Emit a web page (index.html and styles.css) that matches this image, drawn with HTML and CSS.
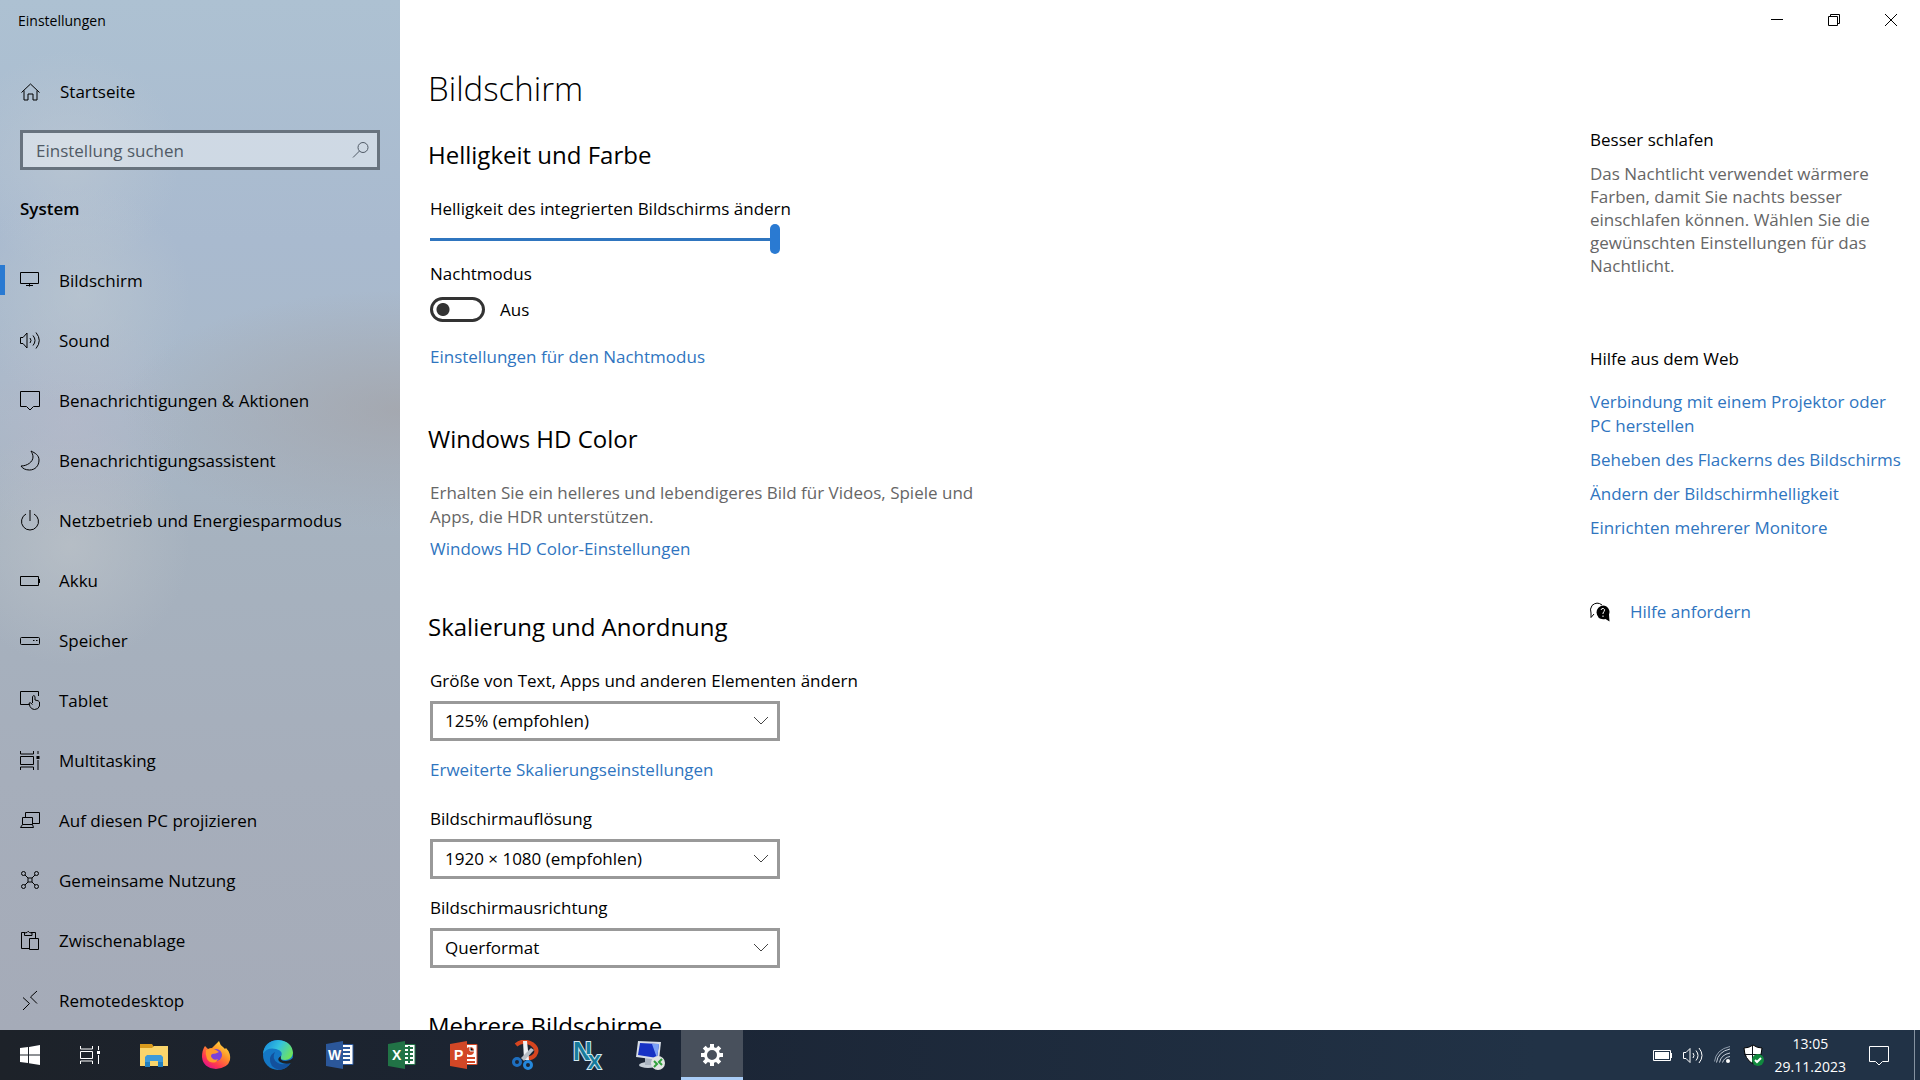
FILE: index.html
```html
<!DOCTYPE html>
<html lang="de">
<head>
	<meta charset="utf-8">
	<title>Einstellungen</title>
	<link rel="stylesheet" href="styles.css">
</head>
<body>
<div class="window">
	<nav class="sidebar">
		<div class="app-title">Einstellungen</div>
		<a class="home" href="#">
			<svg class="icon" viewBox="0 0 20 20"><path d="M1.5 10.500 10.500 2 19.500 10.500M4 8.500v9.500h4v-6h5v6h4V8.500"/></svg>
			<span>Startseite</span>
		</a>
		<div class="search">
			<input type="text" placeholder="Einstellung suchen" aria-label="Einstellung suchen">
			<svg class="icon" viewBox="0 0 20 20"><circle cx="13" cy="7.500" r="5"/><path d="M9.500 11 3 17.500"/></svg>
		</div>
		<div class="category">System</div>
		<ul class="menu">
			<li class="current"><a href="#">
				<svg class="icon" viewBox="0 0 20 20"><path d="M.5 2.500h18v11H.5zM9.500 13.500v3M6 15.500h7"/></svg>
				<span>Bildschirm</span></a></li>
			<li><a href="#">
				<svg class="icon" viewBox="0 0 20 20"><path d="M.5 7.500H3L7 3v15l-4-4.500H.5zM10 8q2 2.500 0 5M13 5.500q4 5 0 10M16 2.500q6.500 8 0 16"/></svg>
				<span>Sound</span></a></li>
			<li><a href="#">
				<svg class="icon" viewBox="0 0 20 20"><path d="M.5 1.500h19v15h-6l-3.500 3.500-3.500-3.500h-6z"/></svg>
				<span>Benachrichtigungen &amp; Aktionen</span></a></li>
			<li><a href="#">
				<svg class="icon" viewBox="0 0 20 20"><path d="M11 1c4 2 8 4 8 9 0 6-4 10-9.500 10-4 0-7-1.500-8.500-4 6 0 12-4 12-9 0-2.500-1-4-2-6z"/></svg>
				<span>Benachrichtigungsassistent</span></a></li>
			<li><a href="#">
				<svg class="icon" viewBox="0 0 20 20"><path d="M10 0v11M6 4a8.500 8.500 0 1 0 8 0"/></svg>
				<span>Netzbetrieb und Energiesparmodus</span></a></li>
			<li><a href="#">
				<svg class="icon" viewBox="0 0 20 20"><path d="M.5 6.500h18v9H.5z"/><path class="solid" d="M18.500 9H20v4h-1.500z"/></svg>
				<span>Akku</span></a></li>
			<li><a href="#">
				<svg class="icon" viewBox="0 0 20 20"><rect x=".5" y="7.500" width="19" height="7" rx="1"/><path d="M13 10.500h1.500M16 10.500h1.500"/></svg>
				<span>Speicher</span></a></li>
			<li><a href="#">
				<svg class="icon" viewBox="0 0 20 20"><path d="M9 14.500H.5v-13h18V6"/><path d="M12.500 13V6.500q1.500-2 2.500 0V10q4 .5 4.500 2v4q-1 3.500-5 3.500-3 0-4.500-3L9 13q1.500-1 3.500 1.500"/></svg>
				<span>Tablet</span></a></li>
			<li><a href="#">
				<svg class="icon" viewBox="0 0 20 20"><path d="M.5 1v3h13V1M.5 6.500h13v8H.5zM.5 20v-3h13v3M18 1v3M18 10v10"/><path class="solid" d="M16.500 6h3v3h-3z"/></svg>
				<span>Multitasking</span></a></li>
			<li><a href="#">
				<svg class="icon" viewBox="0 0 20 20"><path d="M5.500 7V2.500h14v11H13M2.500 14.500v-7h10v7M2.500 14.500.5 17.500h13l-1-3z"/></svg>
				<span>Auf diesen PC projizieren</span></a></li>
			<li><a href="#">
				<svg class="icon" viewBox="0 0 20 20"><circle cx="3.500" cy="3.500" r="2"/><circle cx="16.500" cy="3.500" r="2"/><circle cx="3.500" cy="16.500" r="2"/><circle cx="16.500" cy="16.500" r="2"/><path d="M8 8h4v4H8zM5 5l3 3M15 5l-3 3M5 15l3-3M15 15l-3-3"/></svg>
				<span>Gemeinsame Nutzung</span></a></li>
			<li><a href="#">
				<svg class="icon" viewBox="0 0 20 20"><path d="M9 18.500H1.500v-16H5M11 2.500h4.500V8M4.500 5.500V3l2.500-.5q1-2.500 2.500 0l2.500.5v2.500zM9.500 8.500h9v11h-9z"/></svg>
				<span>Zwischenablage</span></a></li>
			<li><a href="#">
				<svg class="icon" viewBox="0 0 20 20"><path d="M3 7.500 9.500 13.500 3 20M17 1l-6.500 6 6.500 6.500"/></svg>
				<span>Remotedesktop</span></a></li>
		</ul>
	</nav>

	<div class="page">
		<div class="caption">
			<button type="button" aria-label="Minimieren"><svg viewBox="0 0 12 12"><path d="M0 5.500h12"/></svg></button>
			<button type="button" aria-label="Wiederherstellen"><svg viewBox="0 0 12 12"><path d="M.5 2.500h9v9h-9zM2.500 2.500v-2h9v9h-2"/></svg></button>
			<button type="button" aria-label="Schließen"><svg viewBox="0 0 12 12"><path d="M0 0l12 12M12 0L0 12"/></svg></button>
		</div>
		<div class="columns">
			<main class="content">
				<h1>Bildschirm</h1>

				<section>
					<h2>Helligkeit und Farbe</h2>
					<label for="brightness">Helligkeit des integrierten Bildschirms ändern</label>
					<input class="slider" id="brightness" type="range" min="0" max="100" value="100">
					<label for="night">Nachtmodus</label>
					<div class="toggle">
						<input id="night" type="checkbox">
						<span>Aus</span>
					</div>
					<a class="link" href="#">Einstellungen für den Nachtmodus</a>
				</section>

				<section>
					<h2>Windows HD Color</h2>
					<p>Erhalten Sie ein helleres und lebendigeres Bild für Videos, Spiele und Apps, die HDR unterstützen.</p>
					<a class="link" href="#">Windows HD Color-Einstellungen</a>
				</section>

				<section>
					<h2>Skalierung und Anordnung</h2>
					<label for="scale">Größe von Text, Apps und anderen Elementen ändern</label>
					<div class="dropdown">
						<select id="scale"><option>125% (empfohlen)</option></select>
						<svg viewBox="0 0 16 10"><path d="M1 1l7 7 7-7"/></svg>
					</div>
					<a class="link more" href="#">Erweiterte Skalierungseinstellungen</a>
					<label for="resolution">Bildschirmauflösung</label>
					<div class="dropdown">
						<select id="resolution"><option>1920 × 1080 (empfohlen)</option></select>
						<svg viewBox="0 0 16 10"><path d="M1 1l7 7 7-7"/></svg>
					</div>
					<label for="orientation">Bildschirmausrichtung</label>
					<div class="dropdown">
						<select id="orientation"><option>Querformat</option></select>
						<svg viewBox="0 0 16 10"><path d="M1 1l7 7 7-7"/></svg>
					</div>
				</section>

				<section>
					<h2>Mehrere Bildschirme</h2>
				</section>
			</main>

			<aside class="help">
				<h3>Besser schlafen</h3>
				<p>Das Nachtlicht verwendet wärmere Farben, damit Sie nachts besser einschlafen können. Wählen Sie die gewünschten Einstellungen für das Nachtlicht.</p>
				<h3>Hilfe aus dem Web</h3>
				<ul class="web">
					<li><a class="link" href="#">Verbindung mit einem Projektor oder PC herstellen</a></li>
					<li><a class="link" href="#">Beheben des Flackerns des Bildschirms</a></li>
					<li><a class="link" href="#">Ändern der Bildschirmhelligkeit</a></li>
					<li><a class="link" href="#">Einrichten mehrerer Monitore</a></li>
				</ul>
				<div class="support">
					<svg class="icon" viewBox="0 0 20 20"><path d="M4 12 1 15.500V11Q-.5 7 2 3.500 7-1 12 3"/><path class="solid" d="M13 3.500a6.500 6.500 0 0 1 6 9l.5 7-4-2.500q-8 1.500-9-6.500a7 7 0 0 1 6.500-7z"/><path class="mark" d="M11 8q.5-2 2.500-1.500 2 1 .5 3l-1 1.500v1M13 13.500V15"/></svg>
					<a class="link" href="#">Hilfe anfordern</a>
				</div>
			</aside>
		</div>
	</div>
</div>

<footer class="taskbar">
	<div class="system">
		<button type="button" aria-label="Start"><svg width="20" height="20" viewBox="0 0 20 20"><path fill="#fff" d="M0 3l8-1v7.500H0zM9 1.900 20 0v9.500H9zM0 10.500h8V18l-8-1zM9 10.500h11V20L9 18.200z"/></svg></button>
		<button type="button" aria-label="Aktive Anwendungen"><svg width="20" height="20" viewBox="0 0 20 20"><path fill="none" stroke="#fff" d="M.5 1v3h12V1M.5 6.500h12v7H.5zM.5 19v-3h12v3M18.500 1v4M18.500 10v9"/><path fill="#fff" d="M17 6h3v3h-3z"/></svg></button>
	</div>
	<div class="apps">
		<button type="button" aria-label="Explorer"><svg width="30" height="30" viewBox="0 0 30 30"><path fill="#d99a1c" d="M1 4h12l2 3v5H1z"/><path fill="#fad56b" d="M1 8h12l2-2h14v20H1z"/><path fill="#3d9ad9" d="M6 27V17l2-2h14l2 2v10h-5v-6h-8v6z"/><path fill="#2380bf" d="M6 22h5v5H6zM19 22h5v5h-5z"/></svg></button>
		<button type="button" aria-label="Firefox"><svg width="30" height="30" viewBox="0 0 30 30">
			<defs><linearGradient id="fox" x1="1" y1="0" x2=".3" y2="1"><stop offset="0" stop-color="#fff44f"/><stop offset=".45" stop-color="#ff9628"/><stop offset=".8" stop-color="#ff3750"/><stop offset="1" stop-color="#e31587"/></linearGradient></defs>
			<path fill="url(#fox)" d="M4 6 7 9q2-1 4-1l4-4 3-3q1 4 4 6l2 2 1-1q5 5 4 12-2 8-14 9Q2 28 1 17 1 10 4 6z"/><circle cx="15" cy="15" r="6" fill="#7c42d8"/><path fill="#ff9a2b" d="M5 10q5-3 10 0l3 2q-3 2-7 2-2 2 0 4 2 3 6 1l-2 3q-6 2-9-3-2-5-1-9z"/></svg></button>
		<button type="button" aria-label="Edge"><svg width="30" height="30" viewBox="0 0 30 30">
			<defs><linearGradient id="edge" x1="0" y1=".2" x2="1" y2=".6"><stop offset="0" stop-color="#1689dc"/><stop offset=".5" stop-color="#34c3df"/><stop offset="1" stop-color="#6fe45b"/></linearGradient></defs>
			<circle cx="15" cy="15" r="15" fill="#1477c5"/><path fill="url(#edge)" d="M0 14Q1 1 15 0q14 1 15 13-1 7-8 7-5 0-4-3 3-6-5-8Q4 7 0 14z"/><path fill="#13519d" d="M12 12q-4 7 3 11 5 3 13-1-4 7-12 8-10-3-9-12 1-4 5-6z"/><path fill="#1d2228" d="M18 16q-2 5 5 5 4 0 7-3v3l-2 2q-6 2-11-1-4-3 1-6z"/></svg></button>
		<button type="button" aria-label="Word"><svg width="30" height="30" viewBox="0 0 30 30"><path fill="#fff" stroke="#2b579a" d="M15 4.500h13v20H15z"/><path stroke="#2b579a" stroke-width="2" d="M16 8h9M16 12h9M16 16h9M16 20h9"/><path fill="#2b579a" d="M1 4l17-3v28L1 26z"/><text x="3" y="20" class="letter">W</text></svg></button>
		<button type="button" aria-label="Excel"><svg width="30" height="30" viewBox="0 0 30 30"><path fill="#fff" stroke="#217346" d="M15 4.500h13v20H15z"/><path stroke="#217346" stroke-width="2" d="M16 8h10M16 12h10M16 16h10M16 20h10M22 6v17"/><path fill="#217346" d="M1 4l17-3v28L1 26z"/><text x="5" y="20" class="letter">X</text></svg></button>
		<button type="button" aria-label="PowerPoint"><svg width="30" height="30" viewBox="0 0 30 30"><path fill="#fff" stroke="#d24726" d="M15 4.500h13v20H15z"/><circle cx="21" cy="11" r="4" fill="#d24726"/><path stroke="#d24726" stroke-width="2" d="M18 18h8M18 22h8"/><path stroke="#fff" d="M21 7v4h4"/><path fill="#d24726" d="M1 4l17-3v28L1 26z"/><text x="5" y="20" class="letter">P</text></svg></button>
		<button type="button" aria-label="Snipping Tool"><svg width="30" height="30" viewBox="0 0 30 30"><path fill="none" stroke="#d6451f" stroke-width="4" d="M5 5Q12-1 21 4q7 5 3 11-3 4-9 3"/><path fill="#eef1f4" d="M12 1h4l2 19h-5z"/><path fill="#b8bec5" d="M20 8l3 2-10 11-3-3z"/><circle cx="6" cy="22" r="3.500" fill="none" stroke="#1e6fc0" stroke-width="3"/><circle cx="17" cy="25" r="3.500" fill="none" stroke="#2588dc" stroke-width="3"/></svg></button>
		<button type="button" aria-label="NX"><svg width="32" height="32" viewBox="0 0 32 32"><text x="1" y="21" class="nx">N<tspan class="small" dx="-4" dy="9">X</tspan></text></svg></button>
		<button type="button" aria-label="Remotedesktopverbindung"><svg width="32" height="32" viewBox="0 0 32 32"><ellipse cx="14" cy="26" rx="9" ry="3" fill="#c6ced6"/><path fill="#aab4c0" d="M11 19h8v7h-8z"/><path fill="#d8dee6" d="M4 2l23 1-2 18L2 18z"/><path fill="#1732c4" d="M6 4l19 1-2 14L4 16z"/><path fill="#7ba0f5" d="M18 5l7 0-2 14z"/><circle cx="24" cy="24" r="7" fill="#e2e5e3"/><path fill="none" stroke="#32a23c" stroke-width="2" d="M20 22l3 3-3 3M28 20l-3 3 3 3"/></svg></button>
		<button type="button" class="active" aria-label="Einstellungen"><svg width="24" height="24" viewBox="0 0 24 24"><circle cx="12" cy="12" r="6.500" fill="none" stroke="#fff" stroke-width="3"/><path stroke="#fff" stroke-width="4" d="M12 1v4M12 19v4M1 12h4M19 12h4M4.200 4.200 7 7M17 17l2.800 2.800M4.200 19.800 7 17M17 7l2.800-2.800"/></svg></button>
	</div>
	<div class="tray">
		<svg width="20" height="20" viewBox="0 0 20 20"><path fill="none" stroke="#fff" d="M.5 5.500h17v10H.5z"/><path fill="#fff" d="M2 7h14v7H2zM18 8h1v5h-1z"/></svg>
		<svg width="20" height="20" viewBox="0 0 20 20"><path fill="none" stroke="#fff" d="M.5 7.500H3L7 3.500v14L3 13.500H.5zM10 8q2 2.500 0 5M13 5.500q4 5 0 10M16 3q6 7.500 0 15"/></svg>
		<svg width="20" height="20" viewBox="0 0 20 20"><path fill="none" stroke="#c6ced8" d="M3.500 17.500Q5 6.500 17 4M6.500 17.500Q8 9.500 17 8M9.500 17.500q1.500-5 7.500-6"/><path fill="none" stroke="#8e9bab" d="M1.500 16.500Q3 4.500 17 1.500"/><circle cx="15" cy="16" r="2" fill="#fff"/></svg>
		<svg width="22" height="22" viewBox="0 0 22 22"><path fill="#fff" stroke="#000" d="M10 1q4 3 9 3-.5 11-9 16Q1.500 15 1 4q5 0 9-3z"/><path stroke="#10151c" d="M9.500 1v19M1 10.500h18"/><circle cx="15" cy="16" r="6" fill="#10893e"/><path fill="none" stroke="#fff" stroke-width="2" d="M12 16l2 2 4-4"/></svg>
		<div class="clock"><time>13:05</time><time>29.11.2023</time></div>
		<button type="button" aria-label="Info-Center"><svg width="20" height="20" viewBox="0 0 20 20"><path fill="none" stroke="#fff" d="M.5 1.500h19v15h-6L10 20l-3.500-3.500h-6z"/></svg></button>
	</div>
</footer>
</body>
</html>
```

FILE: styles.css
```css
*{box-sizing:border-box;}
body,h1,h2,h3,p,ul{margin:0;padding:0;}
ul{list-style-type:none;}
body{display:flex;flex-direction:column;height:100vh;overflow:hidden;background:#fff;color:#000;font:17px/24px "Open Sans","Noto Sans",sans-serif;}
h1,h2,h3{font-weight:400;}
a{color:inherit;text-decoration:none;}
button{padding:0;border:0;background:none;cursor:pointer;}
input,select{font:inherit;color:inherit;}

.window{flex:1;display:flex;min-height:0;overflow:hidden;}

/* sidebar */
.sidebar{flex:none;width:400px;overflow:hidden;
	background:
		radial-gradient(ellipse 280px 120px at 400px 410px,rgba(163,163,168,.75),rgba(163,164,170,.4) 50%,rgba(165,168,176,0)),
		radial-gradient(circle 110px at 80px 295px,rgba(190,200,208,.6),rgba(190,200,208,0)),
		radial-gradient(circle 110px at 70px 160px,rgba(190,200,210,.6),rgba(190,200,210,0)),
		radial-gradient(circle 120px at 70px 420px,rgba(184,186,202,.6),rgba(184,186,202,0)),
		radial-gradient(circle 120px at 70px 545px,rgba(188,194,200,.7),rgba(188,194,200,0)),
		linear-gradient(#adc1d2,#a9bacf 240px,#a9b9ca 380px,#a6b2bf 540px,#a6aebb 780px,#a5abb8);}
.icon{flex:none;width:20px;height:20px;fill:none;stroke:#000;stroke-width:1;overflow:visible;}
.icon .solid{fill:#000;stroke:none;}
.icon .mark{stroke:#fff;}
.app-title{padding:1px 18px 0;font-size:14px;line-height:40px;}
.home{display:flex;align-items:center;gap:20px;height:60px;margin-top:21px;padding-left:20px;}
.search{display:flex;align-items:center;height:40px;margin:8px 20px 0;padding-right:7px;border:3px solid #68737e;background:rgba(255,255,255,.43);}
.search input{flex:1;min-width:0;padding:1px 13px 0;border:0;outline:0;background:none;}
.search input::placeholder{color:#505a66;opacity:1;}
.search .icon{stroke:#505a66;}
.category{margin:27px 20px 29px;font-weight:600;}
.menu a{display:flex;align-items:center;gap:19px;height:60px;padding-left:20px;}
.menu span{padding-top:2px;}
.menu .current{background:linear-gradient(#2a7ad2,#2a7ad2) left center/5px 30px no-repeat;}

/* main part */
.page{flex:1;display:flex;flex-direction:column;min-width:0;}
.caption{display:flex;flex:none;justify-content:flex-end;height:40px;padding-right:1px;}
.caption button{width:57px;height:38px;}
.caption svg{width:12px;height:12px;fill:none;stroke:#000;vertical-align:middle;}
.columns{display:flex;justify-content:space-between;}
.content{width:600px;padding:25px 0 0 28px;}
h1{font-size:33px;line-height:48px;font-weight:300;}
h2{margin-bottom:26px;font-size:24px;line-height:32px;}
h1 + section{margin-top:26px;}
section + section{margin-top:54px;}
section + section:nth-of-type(3){margin-top:50px;}
section + section:last-child{margin-top:42px;}
section > *{margin-left:2px;}
section > h2{margin-left:0;}
label{display:block;}
.link{display:block;color:#2f75bf;}
p{color:#666;}

.slider{display:block;width:350px;height:30px;margin:3px 0 8px 2px;appearance:none;background:linear-gradient(#2f75bf,#2f75bf) center/100% 3px no-repeat;}
.slider::-webkit-slider-thumb{appearance:none;width:10px;height:30px;border-radius:5px;background:#2a7ad2;}
.toggle{display:flex;align-items:center;gap:15px;margin-top:11px;margin-bottom:23px;height:25px;}
.toggle input{appearance:none;width:55px;height:25px;margin:0;border:3px solid #333;border-radius:13px;background:radial-gradient(circle at 10px center,#333 6px,transparent 7px);}
.content p{width:560px;margin-bottom:8px;}
.dropdown{display:grid;width:350px;margin-top:8px;}
.dropdown select,.dropdown svg{grid-area:1/1;}
.dropdown select{height:40px;padding:0 12px;border:3px solid #999;border-radius:0;background:none;appearance:none;}
.dropdown svg{width:16px;height:10px;margin-right:11px;place-self:center end;fill:none;stroke:#444;pointer-events:none;}
.dropdown + label,.link.more{margin-top:17px;}
.more + label{margin-top:25px;}

/* help column */
.help{flex:none;width:330px;padding:88px 14px 0 0;}
h3{font-size:17px;}
.help p{margin:10px 0 70px;padding-right:26px;line-height:23px;}
.web{display:grid;gap:10px;margin-top:19px;}
.support{display:flex;align-items:center;gap:20px;margin-top:60px;}

/* taskbar */
.taskbar{flex:none;display:flex;height:50px;color:#fff;background:linear-gradient(90deg,#1d2229,#1b2535 35%,#213246 80%,#213246);}
.taskbar button{display:flex;align-items:center;justify-content:center;height:50px;}
.system,.apps{display:flex;}
.system{margin-right:3px;}
.system button{width:60px;}
.apps button{width:62px;}
.apps .active{background:#48505c;border-bottom:3px solid #a9cdf7;border-top:3px solid #48505c;}
.letter{fill:#fff;font-size:14px;font-weight:700;}
.nx{fill:#177b9c;stroke:#d4e8ef;stroke-width:2;paint-order:stroke;font-size:26px;font-family:"Liberation Sans",sans-serif;font-weight:700;}
.nx .small{font-size:20px;}
.tray{display:flex;align-items:center;gap:10px;margin-left:auto;padding-right:5px;}
.tray button{width:46px;margin-right:2px;}
.tray::after{content:"";width:1px;height:50px;background:#8592a0;}
.clock{display:flex;flex-direction:column;align-items:center;font-size:14px;line-height:23px;}
```
